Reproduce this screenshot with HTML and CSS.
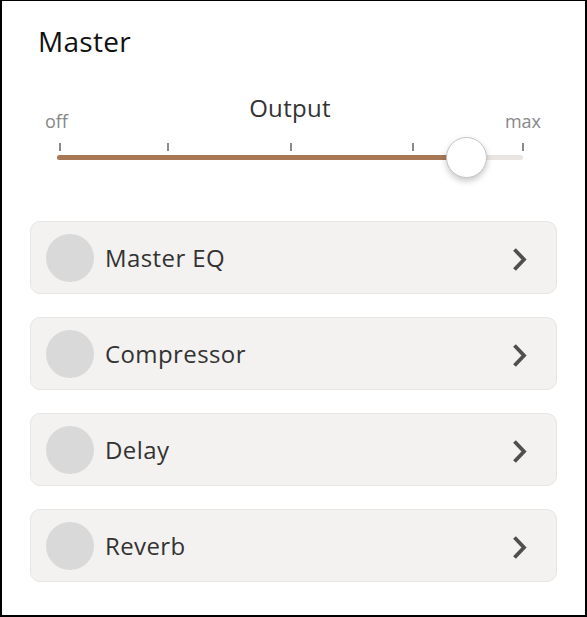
FILE: index.html
```html
<!DOCTYPE html>
<html lang="en">
  <head>
    <meta charset="UTF-8" />
    <meta name="viewport" content="width=device-width, initial-scale=1.0" />
    <title>Master</title>
    <link rel="stylesheet" href="styles.css">
  </head>
  <body>
    <div class="frame">
      <h1 class="title">Master</h1>

      <!-- Output level -->
      <div class="output-head">
        <span class="limit limit-off">off</span>
        <span class="output-label">Output</span>
        <span class="limit limit-max">max</span>
      </div>
      <div class="slider">
        <div class="tick" style="left: 2px"></div>
        <div class="tick" style="left: 110px"></div>
        <div class="tick" style="left: 233px"></div>
        <div class="tick" style="left: 355px"></div>
        <div class="tick" style="left: 465px"></div>
        <div class="track"></div>
        <div class="track-fill" style="width: 87.8%"></div>
        <div class="thumb" style="left: 87.8%"></div>
      </div>

      <!-- Effects -->
      <div class="fx-list">
        <div class="fx-card">
          <span class="fx-dot"></span>
          <span class="fx-name">Master EQ</span>
          <svg class="chevron" width="15" height="25" viewBox="0 0 15 25">
            <polyline points="2.5,2.5 12,12.5 2.5,22.5" />
          </svg>
        </div>
        <div class="fx-card">
          <span class="fx-dot"></span>
          <span class="fx-name">Compressor</span>
          <svg class="chevron" width="15" height="25" viewBox="0 0 15 25">
            <polyline points="2.5,2.5 12,12.5 2.5,22.5" />
          </svg>
        </div>
        <div class="fx-card">
          <span class="fx-dot"></span>
          <span class="fx-name">Delay</span>
          <svg class="chevron" width="15" height="25" viewBox="0 0 15 25">
            <polyline points="2.5,2.5 12,12.5 2.5,22.5" />
          </svg>
        </div>
        <div class="fx-card">
          <span class="fx-dot"></span>
          <span class="fx-name">Reverb</span>
          <svg class="chevron" width="15" height="25" viewBox="0 0 15 25">
            <polyline points="2.5,2.5 12,12.5 2.5,22.5" />
          </svg>
        </div>
      </div>
    </div>
  </body>
</html>
```

FILE: styles.css
```css
body {
  margin: 0;
  font-family: "Open Sans", "Noto Sans", sans-serif;
  color: #333;
}
.frame {
  width: 587px;
  height: 617px;
  box-sizing: border-box;
  border: 2px solid #000;
  border-top-width: 1px;
  padding-top: 21px;
  background: #fff;
  overflow: hidden;
}
.title {
  margin: 0 0 0 36px;
  font-size: 28px;
  line-height: 38px;
  font-weight: 400;
  letter-spacing: 0.3px;
  color: #111;
}
.output-head {
  display: grid;
  grid-template-columns: 1fr auto 1fr;
  align-items: start;
  margin: 32px 44px 0 43px;
}
.output-label {
  font-size: 24px;
  line-height: 32px;
  letter-spacing: 0.3px;
  margin-right: 6px;
}
.limit {
  margin-top: 17px;
  font-size: 18px;
  line-height: 24px;
  color: #888;
}
.limit-max {
  text-align: right;
}
.slider {
  position: relative;
  height: 46px;
  margin: 0 62px 0 55px;
}
.tick {
  position: absolute;
  top: 10px;
  width: 1.5px;
  height: 8px;
  background: #8a8a8a;
}
.track,
.track-fill {
  position: absolute;
  top: 22px;
  left: 0;
  height: 5px;
  border-radius: 3px;
}
.track {
  right: 0;
  background: #e8e5e2;
}
.track-fill {
  background: #a87755;
}
.thumb {
  position: absolute;
  top: 4px;
  width: 41px;
  height: 41px;
  box-sizing: border-box;
  margin-left: -20.5px;
  border-radius: 50%;
  border: 1px solid #c4c4c4;
  background: #fff;
  box-shadow: 0 3px 6px rgba(0, 0, 0, 0.22);
}
.fx-list {
  display: flex;
  flex-direction: column;
  gap: 23px;
  margin: 42px 28px 0;
}
.fx-card {
  display: flex;
  align-items: center;
  height: 73px;
  box-sizing: border-box;
  padding: 0 29px 0 15px;
  background: #f3f2f0;
  border: 1px solid #e8e6e4;
  border-radius: 10px;
}
.fx-dot {
  width: 48px;
  height: 48px;
  margin-right: 11px;
  border-radius: 50%;
  background: #d9d9d9;
}
.fx-name {
  flex: 1;
  font-size: 24px;
  line-height: 32px;
  letter-spacing: 0.4px;
}
.chevron {
  margin-top: 4px;
}
.chevron polyline {
  fill: none;
  stroke: #4f4f4f;
  stroke-width: 3.8;
}
```
